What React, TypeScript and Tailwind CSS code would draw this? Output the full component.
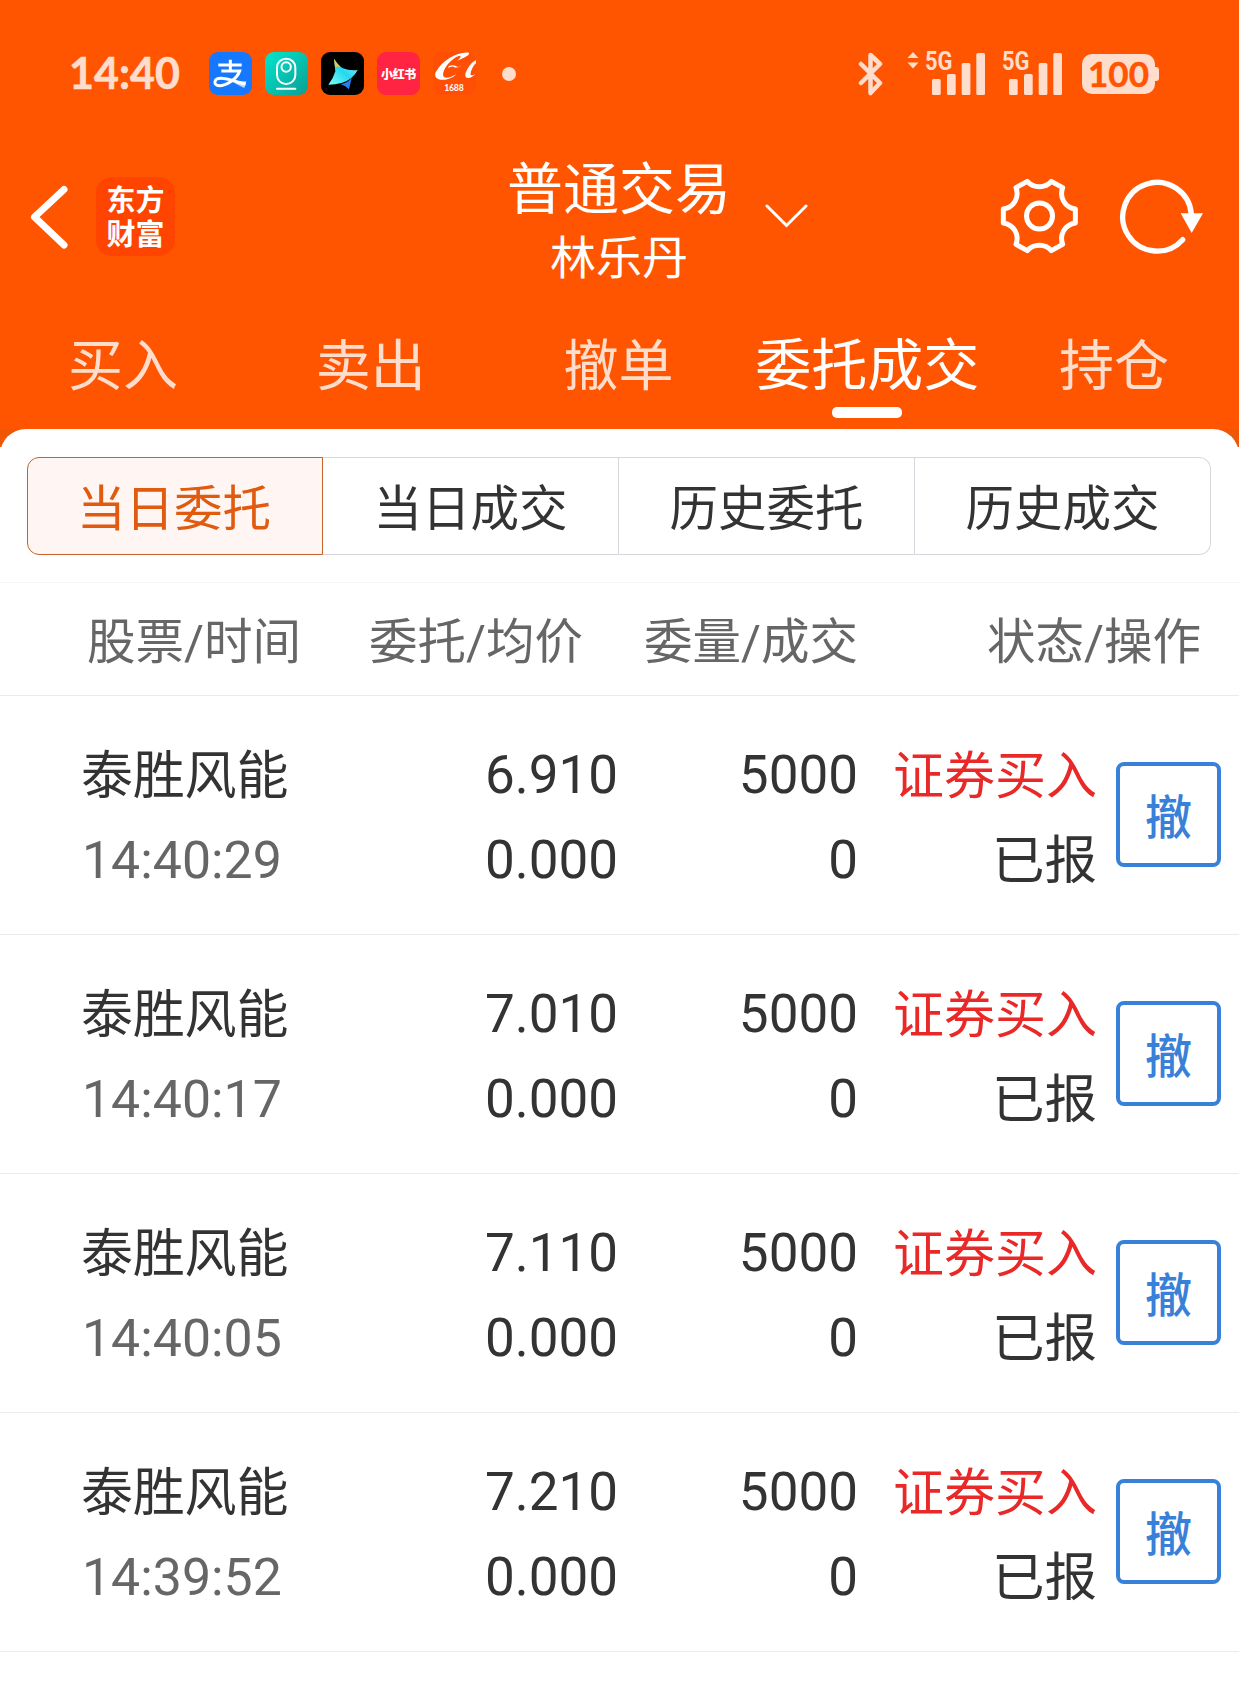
import React from "react";

const ORDERS = [
  { name: "泰胜风能", time: "14:40:29", price: "6.910", avg: "0.000", qty: "5000", filled: "0" },
  { name: "泰胜风能", time: "14:40:17", price: "7.010", avg: "0.000", qty: "5000", filled: "0" },
  { name: "泰胜风能", time: "14:40:05", price: "7.110", avg: "0.000", qty: "5000", filled: "0" },
  { name: "泰胜风能", time: "14:39:52", price: "7.210", avg: "0.000", qty: "5000", filled: "0" },
];

const TABS = ["买入", "卖出", "撤单", "委托成交", "持仓"];
const SEGMENTS = ["当日委托", "当日成交", "历史委托", "历史成交"];

function Signal() {
  return (
    <svg viewBox="-2 -8 62 52" className="-mt-[8px] -ml-[2px] h-[52px] w-[62px] shrink-0" fill="#ffddcc">
      <text x="0" y="17.500" fontFamily="Roboto" fontWeight="700" fontSize="25" textLength="27.5" lengthAdjust="spacingAndGlyphs">5G</text>
      <rect x="7" y="27" width="8.7" height="16" rx="1.5" />
      <rect x="22" y="22" width="8.7" height="21" rx="1.5" />
      <rect x="36.7" y="11" width="8.7" height="32" rx="1.5" />
      <rect x="51.3" y="1" width="8.7" height="42" rx="1.5" />
    </svg>
  );
}

function StatusBar() {
  return (
    <div className="flex h-[147px] items-center pl-[69px]">
      <div className="w-[140px] shrink-0 pb-[2px] font-[Lato] text-[43px] leading-none font-bold text-[#ffddcc] [-webkit-text-stroke:0.6px_#ffddcc]">14:40</div>
      <div className="flex gap-[13px]">
        <div className="size-[43px] overflow-hidden rounded-[9px] bg-[#1677ff]">
          <svg viewBox="0 0 129 129" className="size-full" fill="none" stroke="#fff" strokeWidth="9">
            <path d="M28 39H98M64 23V56M37 57H92C84 82 50 101 31 101C12 101 13 79 36 79C61 79 84 92 110 96" />
            <path d="M82 88L112 88L106 108Q92 102 78 94Z" fill="#fff" stroke="none" opacity=".7" />
          </svg>
        </div>
        <div className="size-[43px] overflow-hidden rounded-[9px] bg-linear-to-br from-[#00e6cf] to-[#0a9f92]">
          <svg viewBox="0 0 129 129" className="size-full" fill="none" stroke="#fff" strokeWidth="6">
            <rect x="36" y="20" width="55" height="76" rx="27" />
            <circle cx="63.5" cy="45" r="14" />
            <path d="M36 110H91" strokeLinecap="round" />
          </svg>
        </div>
        <div className="size-[43px] overflow-hidden rounded-[9px] bg-black">
          <svg viewBox="0 0 129 129" className="size-full">
            <defs>
              <linearGradient id="wing" x1="0" y1="1" x2="1" y2="0">
                <stop offset="0" stopColor="#7dfff0" />
                <stop offset=".5" stopColor="#25d7f2" />
                <stop offset="1" stopColor="#a2f4ff" />
              </linearGradient>
            </defs>
            <path d="M60 97Q80 92 92 78L84 112Q75 102 60 97Z" fill="#2b7bf0" />
            <path d="M39 20Q54 43 66 49Q86 57 110 54Q96 82 64 92Q42 98 22 98Q38 78 43 58Z" fill="url(#wing)" />
            <path d="M39 20Q48 36 58 44L42 44Z" fill="#f4c53b" />
          </svg>
        </div>
        <div className="flex size-[43px] items-center justify-center rounded-[9px] bg-[#ff2442] font-['Noto_Sans_CJK_SC',sans-serif] text-[12px] leading-none font-black tracking-[-0.3px] whitespace-nowrap text-white">
          小红书
        </div>
        <div className="size-[43px] overflow-hidden rounded-[9px] bg-[#ff4f05]">
          <svg viewBox="0 0 129 129" className="size-full" fill="#fff">
            <path d="M108 2C75 -2 28 24 8 61C2 76 13 86 37 83C53 81 63 74 70 66C53 77 35 81 31 72C25 58 52 20 77 12C87 9 83 19 71 27C91 19 112 10 108 2Z" />
            <path d="M47 43Q61 37 70 43T85 40Q72 51 61 44Q54 42 46 48Z" />
            <path d="M129 25C115 28 90 66 99 76C106 82 121 74 127 66C119 71 110 72 113 63C115 53 123 38 129 34Z" />
            <text x="34" y="116" fontFamily="Lato" fontWeight="700" fontSize="26" textLength="58">1688</text>
          </svg>
        </div>
      </div>
      <div className="ml-[26px] size-[14px] rounded-full bg-[#ffddcc]" />
      <svg viewBox="0 0 26 44" className="ml-[342px] h-[44px] w-[26px] shrink-0" fill="none" stroke="#ffddcc" strokeWidth="4.500" strokeLinecap="round" strokeLinejoin="round">
        <path d="M3 12L22 31L12.5 41V3L22 12L3 31" />
      </svg>
      <svg viewBox="0 0 12 44" className="mr-[6px] ml-[23px] h-[44px] w-[12px] shrink-0" fill="#ffddcc">
        <path d="M6 0L11.500 6H.5ZM6 16.500L11.500 10.500H.5Z" />
      </svg>
      <Signal />
      <div className="w-[17px] shrink-0" />
      <Signal />
      <div className="ml-[20px] flex h-[40px] w-[73px] shrink-0 items-center justify-center rounded-[10px] bg-[#ffddcc] font-[Lato] text-[35px] leading-none font-bold text-[#ff5500] [-webkit-text-stroke:0.5px_#ff5500]">
        100
      </div>
      <div className="h-[14px] w-[4px] rounded-r-[3px] bg-[#ffddcc]" />
    </div>
  );
}

function TitleBar() {
  return (
    <div className="flex h-[175px] items-start">
      <svg viewBox="0 0 40 64" className="mt-[38px] ml-[28px] h-[64px] w-[40px] shrink-0" fill="none" stroke="#fff" strokeWidth="7" strokeLinecap="round" strokeLinejoin="round">
        <path d="M36 4.500L6.500 32L36 60" />
      </svg>
      <div className="mt-[30px] ml-[28px] flex size-[79px] shrink-0 flex-col items-center justify-center rounded-[16px] bg-[#ff4400] pb-[3px] font-['Noto_Sans_CJK_SC',sans-serif] text-[29px] leading-[34px] font-bold text-white">
        <span className="h-[34px]">东方</span>
        <span className="h-[34px]">财富</span>
      </div>
      <div className="ml-[332px] w-[224px] shrink-0 pt-[9px] text-center text-white">
        <div className="text-[56px] leading-[68px]">普通交易</div>
        <div className="text-[46px] leading-[69px]">林乐丹</div>
      </div>
      <svg viewBox="0 0 44 26" className="mt-[56px] ml-[33px] h-[26px] w-[44px] shrink-0" fill="none" stroke="#fff" strokeWidth="3" strokeLinecap="round">
        <path d="M3 3L22.500 22.500L42 3" />
      </svg>
      <svg viewBox="120 80 242 234" className="mt-[30px] ml-[191px] h-[78px] w-[80.7px] shrink-0" fill="none" stroke="#fff" strokeWidth="15" strokeLinejoin="round">
        <path d="M205 93Q219 109 241 109Q263 109 277 93L311 112C300 142 318 171 349 176V218C318 223 300 252 311 282L277 301Q263 285 241 285Q219 285 205 301L171 282C182 252 164 223 133 218V176C164 171 182 142 171 112Z" />
        <circle cx="241.500" cy="197" r="39" />
      </svg>
      <svg viewBox="480 84 260 234" className="mt-[31px] ml-[39px] h-[78px] w-[86.7px] shrink-0">
        <path d="M697 194A103 103 0 1 0 671 269" fill="none" stroke="#fff" strokeWidth="16" strokeLinecap="round" />
        <path d="M665 190H732L698 249Z" fill="#fff" />
      </svg>
    </div>
  );
}

function OrderRow({ order }: { order: (typeof ORDERS)[number] }) {
  return (
    <div className="grid h-[239px] grid-cols-[358px_260px_240px_239px_123px] border-b-[1px] border-[#ebebeb] pt-[37px] text-[53px] leading-[85px] text-[#333333]">
      <div className="pl-[81px]">
        <div className="h-[85px] text-[52px] leading-[87px] tracking-[-0.2px]">{order.name}</div>
        <div className="pl-px text-[51.800px] text-[#666666]">{order.time}</div>
      </div>
      <div className="text-right">
        <div>{order.price}</div>
        <div>{order.avg}</div>
      </div>
      <div className="text-right">
        <div>{order.qty}</div>
        <div>{order.filled}</div>
      </div>
      <div className="text-right whitespace-nowrap">
        <div className="h-[85px] text-[51px] leading-[87px] text-[#e92828]">证券买入</div>
        <div className="text-[52.500px] leading-[87px]">已报</div>
      </div>
      <button className="mt-[29px] ml-[19px] flex size-[105px] items-center justify-center rounded-[8px] border-4 border-[#3880d8] pt-[5px] text-[47px] leading-none font-medium text-[#3880d8]">
        撤
      </button>
    </div>
  );
}

export default function App() {
  return (
    <div className="h-[1689px] w-[1239px] overflow-hidden bg-white font-[Roboto,'Noto_Sans_CJK_SC',sans-serif]">
      <header className="h-[429px] bg-[#ff5500]">
        <StatusBar />
        <TitleBar />
        <nav className="grid grid-cols-5">
          {TABS.map((tab) => (
            <div key={tab} className={tab === "委托成交" ? "flex flex-col items-center text-white" : "flex flex-col items-center pr-[2px] text-[#ffddcc]"}>
              <span className={tab === "委托成交" ? "h-[85px] text-[56px] leading-[89px] whitespace-nowrap" : "h-[85px] text-[55px] leading-[89px] whitespace-nowrap"}>{tab}</span>
              {tab === "委托成交" && <span className="h-[11px] w-[70px] rounded-[5px] bg-white" />}
            </div>
          ))}
        </nav>
      </header>
      <div className="bg-linear-to-b from-[#ee5706] from-[18px] to-white to-[18px]">
        <div className="h-[154px] rounded-t-[26px] border-b border-[#f5f5f5] bg-white px-[27px] pt-[28px]">
          <div className="grid h-[98px] w-[1184px] grid-cols-4">
            {SEGMENTS.map((label, i) => (
              <button
                key={label}
                className={
                  i === 0
                    ? "z-10 rounded-l-[12px] border border-[#c4622b] bg-[#fff6f3] pt-[8px] pr-[2px] text-[48.500px] leading-[88px] text-[#e05a10]"
                    : i === 3
                      ? "rounded-r-[12px] border-y border-r border-[#d5d8dc] pt-[8px] text-[48.500px] leading-[88px] text-[#333333]"
                      : "border-y border-r border-[#d5d8dc] pt-[8px] text-[48.500px] leading-[88px] text-[#333333]"
                }
              >
                {label}
              </button>
            ))}
          </div>
        </div>
      </div>
      <div className="grid h-[113px] grid-cols-[356px_227px_275px_343px] border-b border-[#ebebeb] pt-[4px] text-right text-[48.500px] leading-[112px] text-[#666666]">
        <div className="pl-[87px] text-left">股票/时间</div>
        <div>委托/均价</div>
        <div>委量/成交</div>
        <div>状态/操作</div>
      </div>
      {ORDERS.map((order) => (
        <OrderRow key={order.time} order={order} />
      ))}
    </div>
  );
}
